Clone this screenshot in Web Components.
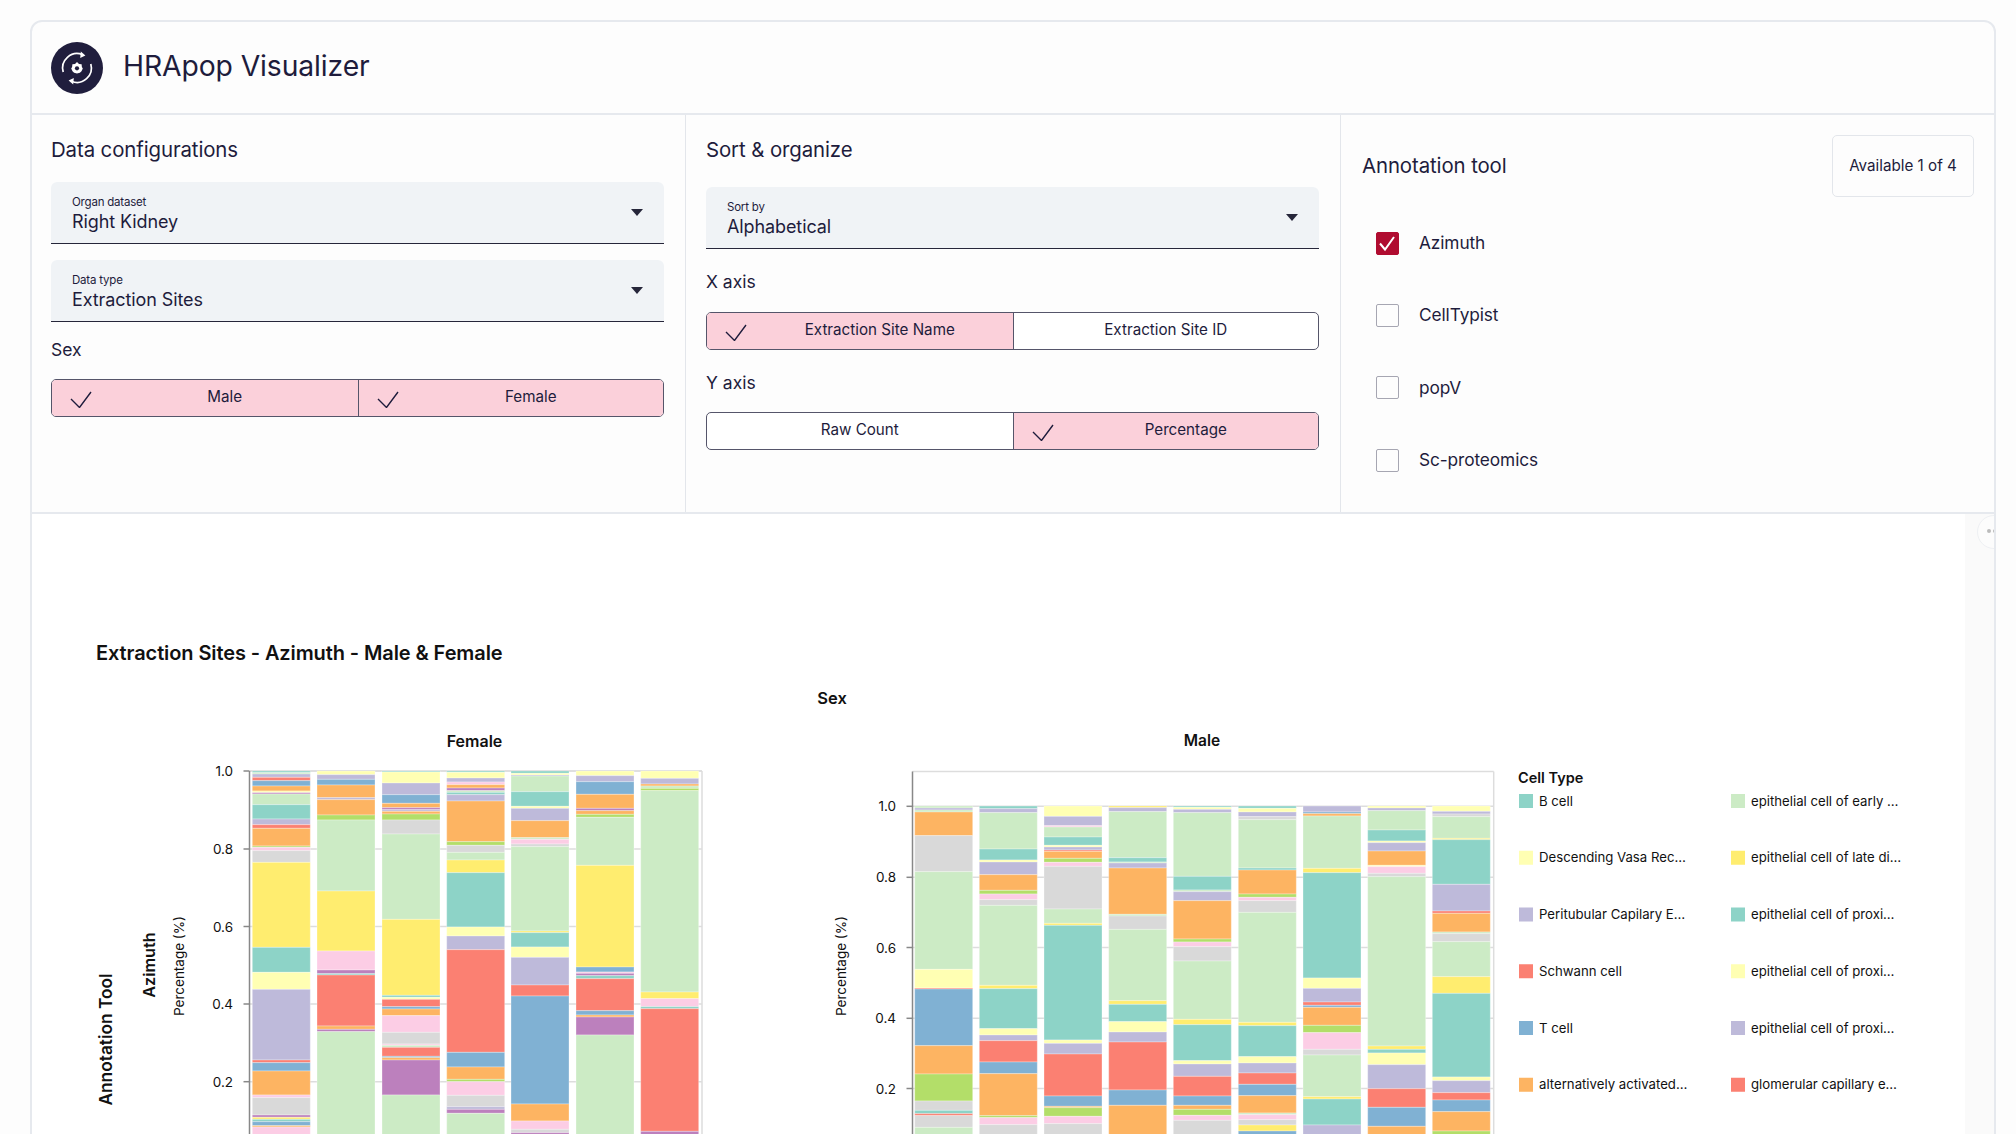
<!DOCTYPE html>
<html lang="en-us">
<head>
<meta charset="utf-8">
<title>HRApop Visualizer</title>
<style>
    html, body { margin: 0; height: 100%; overflow: hidden; background: #fdfdfd; }
    body { font-family: Inter, "Liberation Sans", sans-serif; color: #1e1c3c; }
</style>
</head>
<body>

<template id="hraSelectTemplate">
    <style>
        :host { display: block; height: 62px; box-sizing: border-box; background: #f0f3f6; border-radius: 6px 6px 0 0; border-bottom: 1px solid #26263a; position: relative; }
        .inner { display: flex; align-items: center; height: 100%; padding: 0 21px; }
        .text { flex: 1; padding-top: 2px; }
        .label { font-size: 11.5px; line-height: 16px; letter-spacing: -.2px; }
        .value { font-size: 18px; line-height: 24px; letter-spacing: -.1px; }
        .arrow { width: 0; height: 0; border-left: 6.5px solid transparent; border-right: 6.5px solid transparent; border-top: 7px solid #26263a; }
    </style>
    <div class="inner">
        <div class="text">
            <div class="label"></div>
            <div class="value"></div>
        </div>
        <div class="arrow"></div>
    </div>
</template>

<template id="hraToggleTemplate">
    <style>
        :host { display: flex; height: 38px; box-sizing: border-box; border: 1.5px solid #55556a; border-radius: 5px; overflow: hidden; background: #fff; }
        .btn { flex: none; width: 50%; box-sizing: border-box; display: flex; align-items: center; font-size: 15.2px; padding-left: 18px; }
        .btn + .btn { border-left: 1.5px solid #55556a; }
        .btn.on { background: #fbd0da; }
        .btn svg { width: 22px; height: 17px; flex: none; margin-top: 2px; }
        .btn span { flex: 1; text-align: center; margin-top: -4px; }
        .btn:not(.on) { padding-left: 0; }
    </style>
</template>

<template id="hraCheckTemplate">
    <style>
        :host { display: flex; align-items: center; height: 72.3px; padding-left: 14px; font-size: 17.3px; letter-spacing: -.1px; }
        .box { width: 23px; height: 23px; box-sizing: border-box; border: 1.5px solid #a6a6b2; border-radius: 2px; margin-right: 20px; flex: none; }
        :host([checked]) .box { background: #b00c30; border-color: #b00c30; }
        svg { display: none; width: 20px; height: 20px; }
        :host([checked]) svg { display: block; }
        .label { margin-top: -1px; }
    </style>
    <div class="box">
        <svg viewBox="0 0 20 20"><path d="M3 10.5l5 6L17 4" fill="none" stroke="#fff" stroke-width="2"/></svg>
    </div>
    <div class="label"><slot></slot></div>
</template>

<template id="hraHeaderTemplate">
    <style>
        :host { display: flex; align-items: center; height: 93px; box-sizing: border-box; padding: 0 0 0 19px; border-bottom: 2px solid #e6e9ee; }
        svg { width: 52px; height: 52px; flex: none; margin-right: 20px; }
        h1 { margin: 0 0 4px; font-size: 28.3px; font-weight: 400; letter-spacing: -.1px; }
    </style>
    <svg viewBox="0 0 52 52">
        <circle cx="26" cy="26" r="26" fill="#201e3d"/>
        <path d="M12.2 30A14.4 14.4 0 0 1 31.5 12.7" fill="none" stroke="#fff" stroke-width="1.7"/>
        <path d="M29.8 9.6l4.6 4-5.2 2.4z" fill="#fff"/>
        <path d="M39.8 22A14.4 14.4 0 0 1 20.5 39.3" fill="none" stroke="#fff" stroke-width="1.7"/>
        <path d="M22.2 42.4l-4.6-4 5.2-2.4z" fill="#fff"/>
        <path d="M26 20l2 1.9 2.6.4.3 2.6.9 1.7-1.3 2.6-1.6 1.6-2.9.6-2.9-.6-1.6-1.6-1.3-2.6.9-1.7.3-2.6 2.6-.4z" fill="#fff"/>
        <circle cx="26" cy="26.3" r="2.1" fill="#201e3d"/>
    </svg>
    <h1><slot></slot></h1>
</template>

<template id="hraPanelTemplate">
    <style>
        :host { display: block; box-sizing: border-box; border-right: 1px solid #e3e6eb; }
        :host(:last-child) { border-right: 0; }
    </style>
    <slot></slot>
</template>

<template id="hraChartTemplate">
    <style>
        :host { display: block; height: 700px; }
        svg { display: block; width: 1932px; height: 700px; font-family: Inter, "Liberation Sans", sans-serif; }
        text { fill: #111; }
    </style>
</template>

<hra-app></hra-app>

<script id="src">
    function templateRoot(el, id) {
        const root = el.attachShadow({ mode: 'open' });
        root.appendChild(document.getElementById(id).content.cloneNode(true));
        return root;
    }

    class HraSelect extends HTMLElement {
        constructor() {
            super();
            const root = templateRoot(this, 'hraSelectTemplate');
            root.querySelector('.label').textContent = this.getAttribute('label');
            root.querySelector('.value').textContent = this.getAttribute('value');
        }
    }

    // options="Male*|Female*"  a star marks the pressed button
    class HraToggle extends HTMLElement {
        constructor() {
            super();
            const root = templateRoot(this, 'hraToggleTemplate');
            this.getAttribute('options').split('|').forEach(opt => {
                const on = opt.endsWith('*');
                const btn = document.createElement('div');
                btn.className = on ? 'btn on' : 'btn';
                btn.innerHTML = (on ? '<svg viewBox="0 0 22 17"><path d="M1 8l8.5 8.5L21 1" fill="none" stroke="#1e1c3c" stroke-width="1.4"/></svg>' : '')
                    + '<span>' + opt.replace('*', '') + '</span>';
                root.appendChild(btn);
            });
        }
    }

    class HraCheck extends HTMLElement {
        constructor() {
            super();
            templateRoot(this, 'hraCheckTemplate');
        }
    }

    class HraHeader extends HTMLElement {
        constructor() {
            super();
            templateRoot(this, 'hraHeaderTemplate');
        }
    }

    class HraPanel extends HTMLElement {
        constructor() {
            super();
            templateRoot(this, 'hraPanelTemplate');
        }
    }

    const COLORS = {
        t: '#8dd3c7', y: '#ffffb3', l: '#bebada', r: '#fb8072', b: '#80b1d3', o: '#fdb462',
        g: '#b3de69', p: '#fccde5', k: '#d9d9d9', u: '#bc80bd', c: '#ccebc5', e: '#ffed6f'
    };

    // each bar: colour letter + bottom edge of the segment, in px below the top of the crop
    const FEMALE = {
        x: [252.3, 317, 382, 446.7, 511, 576, 640.7],
        bars: [
            't38 c42 l52 r62 b78 o93 y98 u102 c134 t177 l194 r205 o258 g262 p272 k307 e562 t637 y688 l900 r908 b933 o1005 p1013 k1065 u1072 e1078 t1085 b1097 o1101 p1190',
            'y44 l58 b75 o113 l119 o165 g180 c393 e573 p630 u641 t645 r798 o808 u815 c1190',
            't36 y69 l104 b130 o143 u149 l154 o162 g180 k222 c478 e706 t712 y718 r740 b747 o767 p817 k852 p856 c862 r889 b893 o900 u1005 c1190',
            't37 y54 l66 p74 o84 u92 c97 t104 l123 o245 g256 k277 c300 e338 t501 y528 l569 r877 b921 o958 g965 p1006 k1040 l1048 u1060 c1190',
            't40 y45 l48 c95 t139 y145 l182 o233 c238 p252 k260 c513 e518 t561 y592 l675 r708 b1032 o1083 p1108 k1118 u1190',
            'y47 l65 b103 o145 u152 o163 g172 c316 e621 b636 p640 u647 t656 r752 b765 o771 u825 c1190',
            'y55 l72 o78 c85 g92 c696 e716 p740 t746 r1114 u1190'
        ]
    };
    const MALE = {
        x: [914.7, 979.3, 1044, 1108.7, 1173.3, 1238.3, 1303, 1367.7, 1432.3],
        bars: [
            'c54 l60 c66 o137 k245 c538 y594 r597 b767 o852 g933 k961 t971 r977 k1012 c1100',
            't56 l68 c177 t210 y216 l254 o301 g312 p329 k346 c586 e596 t716 y735 l752 r816 b851 o977 g983 p1004 k1100',
            'y79 l107 p111 c141 t166 y171 l180 r184 o205 g217 p229 k357 c400 e406 t750 y760 l792 r918 b949 o953 g979 p1001 k1100',
            'e53 l65 c203 t216 c219 l234 o373 c378 k418 c632 e643 t695 y726 l756 r900 b946 o1100',
            't52 y58 l68 c259 t300 c305 l332 o447 g456 p470 k513 c688 e704 t812 y822 l859 r918 b946 o958 g976 p991 k1100',
            't55 y66 l80 k89 c234 t240 o312 g322 p332 k367 c697 e707 t800 y819 l849 r883 b917 o969 c974 p989 k1005 e1023 b1100',
            'l66 b71 o78 c235 e248 t564 y595 l636 r646 b652 o706 g728 p778 k795 c920 e927 t1005 l1100',
            'y54 l62 c120 t153 y158 l183 o226 y230 p250 k260 c768 e778 t789 y824 l896 r952 b1009 o1100',
            'y64 l72 k80 c145 e149 t283 l363 r370 o426 c431 k455 c560 e610 t861 y872 l908 r930 b965 o1023 g1100'
        ]
    };
    const LEGEND = [
        ['t', 'B cell'], ['y', 'Descending Vasa Rec…'], ['l', 'Peritubular Capilary E…'], ['r', 'Schwann cell'], ['b', 'T cell'], ['o', 'alternatively activated…'],
        ['c', 'epithelial cell of early …'], ['e', 'epithelial cell of late di…'], ['t', 'epithelial cell of proxi…'], ['y', 'epithelial cell of proxi…'], ['l', 'epithelial cell of proxi…'], ['r', 'glomerular capillary e…']
    ];

    class HraChart extends HTMLElement {
        constructor() {
            super();
            const root = templateRoot(this, 'hraChartTemplate');
            let s = '';
            const text = (x, y, str, size, weight, anchor, rot) => {
                const tr = rot ? ` transform="rotate(-90 ${x} ${y})"` : '';
                s += `<text x="${x}" y="${y}" font-size="${size}" font-weight="${weight}" text-anchor="${anchor}" dominant-baseline="central"${tr}>${str}</text>`;
            };
            const bars = (set, originY, width) => {
                set.bars.forEach((bar, i) => {
                    let top = null;
                    bar.split(' ').forEach(seg => {
                        const end = originY + parseFloat(seg.slice(1)) / 3;
                        if (top === null) top = set.top;
                        s += `<rect x="${set.x[i]}" y="${top}" width="${width}" height="${Math.max(end - top, 0)}" fill="${COLORS[seg[0]]}" stroke="#fff" stroke-opacity=".3" stroke-width="1"/>`;
                        top = end;
                    });
                });
            };
            const axis = (left, right, plotTop, ticks, tickLabelX) => {
                ticks.forEach(([label, y]) => {
                    s += `<line x1="${left}" x2="${right}" y1="${y}" y2="${y}" stroke="#ddd" stroke-width="1.5"/>`;
                    s += `<line x1="${left - 6}" x2="${left}" y1="${y}" y2="${y}" stroke="#888" stroke-width="1.5"/>`;
                    text(tickLabelX, y, label, 13.5, 400, 'end');
                });
                s += `<line x1="${left}" x2="${right}" y1="${plotTop}" y2="${plotTop}" stroke="#ddd" stroke-width="1.5"/>`;
                s += `<line x1="${right}" x2="${right}" y1="${plotTop}" y2="1200" stroke="#ddd" stroke-width="1.5"/>`;
                s += `<line x1="${left}" x2="${left}" y1="${plotTop}" y2="1200" stroke="#888" stroke-width="1.5"/>`;
            };

            text(96, 652.5, 'Extraction Sites - Azimuth - Male &amp; Female', 20, 600, 'start');
            s = s.replace('font-size="20"', 'font-size="20" letter-spacing="-.1"');
            text(832, 698, 'Sex', 16.5, 600, 'middle');
            text(474.5, 740.5, 'Female', 16, 600, 'middle');
            text(1202, 740.5, 'Male', 15.5, 600, 'middle');
            text(105, 1039.5, 'Annotation Tool', 17.3, 600, 'middle', true);
            text(148.5, 965, 'Azimuth', 16.3, 600, 'middle', true);
            text(179, 966, 'Percentage (%)', 13.5, 400, 'middle', true);
            text(841, 966, 'Percentage (%)', 13.5, 400, 'middle', true);

            axis(249.5, 702, 771, [['1.0', 771], ['0.8', 849], ['0.6', 926.5], ['0.4', 1004], ['0.2', 1081.7]], 233);
            FEMALE.top = 771;
            bars(FEMALE, 760, 58);
            axis(912.5, 1493.7, 771.5, [['1.0', 806.3], ['0.8', 877.3], ['0.6', 947.5], ['0.4', 1018.3], ['0.2', 1088.5]], 896);
            MALE.top = 806;
            bars(MALE, 790, 58);

            text(1518, 777.5, 'Cell Type', 14.5, 600, 'start');
            LEGEND.forEach(([c, label], i) => {
                const col = i < 6 ? 0 : 1;
                const y = 801 + (i % 6) * 56.75;
                const x = col ? 1731 : 1519;
                s += `<rect x="${x}" y="${y - 7}" width="14" height="14" fill="${COLORS[c]}"/>`;
                text(x + 20, y - .5, label, 13.2, 400, 'start');
            });

            root.innerHTML += `<svg viewBox="32 514 1932 700">${s}</svg>`;
        }
    }

    class HraApp extends HTMLElement {
        constructor() {
            super();
            this.attachShadow({ mode: 'open' }).innerHTML = `
                <style>
                    :host { display: block; margin: 20px 20px 0 30px; height: 1300px; box-sizing: border-box; border: 2px solid #e6e9ee; border-radius: 12px; overflow: hidden; position: relative; }
                    .config { display: grid; grid-template-columns: 654px 655px 1fr; height: 399px; border-bottom: 2px solid #e6e9ee; box-sizing: border-box; }
                    .p1 { padding: 22px 21px 0 19px; }
                    .p2 { padding: 22px 21px 0 20px; }
                    .p3 { padding: 20px 20px 0 21px; }
                    h2 { margin: 0; font-size: 20.4px; line-height: 26px; font-weight: 400; letter-spacing: -.1px; }
                    h3 { margin: 0; font-size: 17.5px; line-height: 24px; font-weight: 400; }
                    .head { display: flex; align-items: center; justify-content: space-between; height: 62px; }
                    .badge { width: 142px; height: 62px; box-sizing: border-box; border: 1.5px solid #e3e6eb; border-radius: 5px; font-size: 15.2px; text-align: center; padding-top: 20px; line-height: 20px; }
                    .checks { margin-top: 10px; }
                    .lower { display: flex; background: #fafafa; }
                    .chart-wrap { flex: 1; min-width: 0; background: #fff; height: 800px; }
                    .strip { width: 29px; flex: none; }
                    .handle { position: absolute; right: -17px; top: 493px; width: 34px; height: 34px; box-sizing: border-box; border: 1.5px solid #eef0f3; border-radius: 50%; background: #fcfcfc; }
                    .handle i { position: absolute; top: 13px; width: 4px; height: 4px; border-radius: 50%; background: #bbb; }
                </style>
                <hra-header>HRApop Visualizer</hra-header>
                <div class="config">
                    <hra-panel class="p1">
                        <h2>Data configurations</h2>
                        <hra-select label="Organ dataset" value="Right Kidney" style="margin-top:19px"></hra-select>
                        <hra-select label="Data type" value="Extraction Sites" style="margin-top:16px"></hra-select>
                        <h3 style="margin-top:16px">Sex</h3>
                        <hra-toggle options="Male*|Female*" style="margin-top:17px"></hra-toggle>
                    </hra-panel>
                    <hra-panel class="p2">
                        <h2>Sort &amp; organize</h2>
                        <hra-select label="Sort by" value="Alphabetical" style="margin-top:24px"></hra-select>
                        <h3 style="margin-top:21px">X axis</h3>
                        <hra-toggle options="Extraction Site Name*|Extraction Site ID" style="margin-top:18px"></hra-toggle>
                        <h3 style="margin-top:21px">Y axis</h3>
                        <hra-toggle options="Raw Count|Percentage*" style="margin-top:17px"></hra-toggle>
                    </hra-panel>
                    <hra-panel class="p3">
                        <div class="head">
                            <h2>Annotation tool</h2>
                            <div class="badge">Available 1 of 4</div>
                        </div>
                        <div class="checks">
                            <hra-check checked>Azimuth</hra-check>
                            <hra-check>CellTypist</hra-check>
                            <hra-check>popV</hra-check>
                            <hra-check>Sc-proteomics</hra-check>
                        </div>
                    </hra-panel>
                </div>
                <div class="lower">
                    <div class="chart-wrap"><hra-chart></hra-chart></div>
                    <div class="strip"></div>
                </div>
                <div class="handle"><i style="left:9px"></i><i style="left:15px"></i></div>
            `;
        }
    }

    customElements.define('hra-select', HraSelect);
    customElements.define('hra-toggle', HraToggle);
    customElements.define('hra-check', HraCheck);
    customElements.define('hra-header', HraHeader);
    customElements.define('hra-panel', HraPanel);
    customElements.define('hra-chart', HraChart);
    customElements.define('hra-app', HraApp);
</script>
</body>
</html>
